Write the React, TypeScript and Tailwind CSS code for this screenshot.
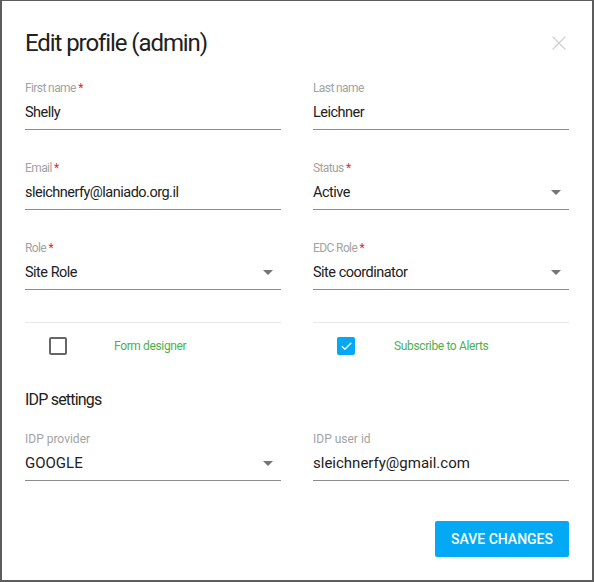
import { Check, X } from "lucide-react";

function Caret() {
    return (
        <svg width="10" height="5" viewBox="0 0 10 5" className="shrink-0">
            <path d="M0 0 L10 0 L5 5 Z" fill="#757575" />
        </svg>
    );
}

function Field({ label, value, required, select, narrow }: { label: string; value: string; required?: boolean; select?: boolean; narrow?: boolean }) {
    // the top rows of the form use a narrower face than the IDP rows
    return (
        <div className="flex flex-col">
            <div className={`text-[12px] leading-[16px] text-[#a3a3a3] ${narrow ? "tracking-[-0.05em]" : ""}`}>
                {label}
                {required && <span className="text-[#d32f2f]"> *</span>}
            </div>
            <div className="flex items-center justify-between h-[34px] pr-2 border-b border-[#8c8c8c]">
                <span className={narrow ? "text-[14.5px] text-[#212121] tracking-[-0.035em]" : "text-[15px] text-[#212121]"}>{value}</span>
                {select && <Caret />}
            </div>
        </div>
    );
}

export default function App() {
    return (
        <div className="w-[594px] h-[582px] bg-[#5c5c5c] pt-px pl-[2px] pr-[2px] pb-[2px]" style={{ fontFamily: "Roboto, sans-serif" }}>
            <div className="bg-white h-full pl-[23px] pr-[23px] pt-[28px]">
                <div className="flex items-center justify-between h-[28px]">
                    <h1 className="text-[24px] leading-[28px] text-[#212121] tracking-[-0.045em]">Edit profile (admin)</h1>
                    <X size={24} strokeWidth={1.2} className="text-[#d0d0d0] -mr-[2px]" />
                </div>

                <div className="grid grid-cols-2 gap-x-8 gap-y-[30px] mt-[23px]">
                    <Field label="First name" value="Shelly" required narrow />
                    <Field label="Last name" value="Leichner" narrow />
                    <Field label="Email" value="sleichnerfy@laniado.org.il" required narrow />
                    <Field label="Status" value="Active" required select narrow />
                    <Field label="Role" value="Site Role" required select narrow />
                    <Field label="EDC Role" value="Site coordinator" required select narrow />
                </div>

                <div className="grid grid-cols-2 gap-x-8 mt-[32px]">
                    <div className="border-t border-[#e8e8e8] flex items-center h-[47px] pl-6">
                        <div className="w-[18px] h-[18px] border-2 border-[#666] rounded-[2px]" />
                        <span className="ml-[47px] text-[12px] text-[#4caf50] tracking-[-0.03em]">Form designer</span>
                    </div>
                    <div className="border-t border-[#e8e8e8] flex items-center h-[47px] pl-6">
                        <div className="w-[18px] h-[18px] bg-[#03a9f4] rounded-[2px] flex items-center justify-center">
                            <Check size={13} strokeWidth={2.5} className="text-white" />
                        </div>
                        <span className="ml-[39px] text-[12px] text-[#4caf50] tracking-[-0.03em]">Subscribe to Alerts</span>
                    </div>
                </div>

                <h2 className="text-[16px] leading-[20px] text-[#212121] mt-[21px] tracking-[-0.05em]">IDP settings</h2>

                <div className="grid grid-cols-2 gap-x-8 mt-[21px]">
                    <Field label="IDP provider" value="GOOGLE" select />
                    <Field label="IDP user id" value="sleichnerfy@gmail.com" />
                </div>

                <div className="flex justify-end mt-[40px]">
                    <button className="bg-[#03a9f4] text-white text-[14px] font-medium px-4 h-[36px] rounded-[2px]">SAVE CHANGES</button>
                </div>
            </div>
        </div>
    );
}
